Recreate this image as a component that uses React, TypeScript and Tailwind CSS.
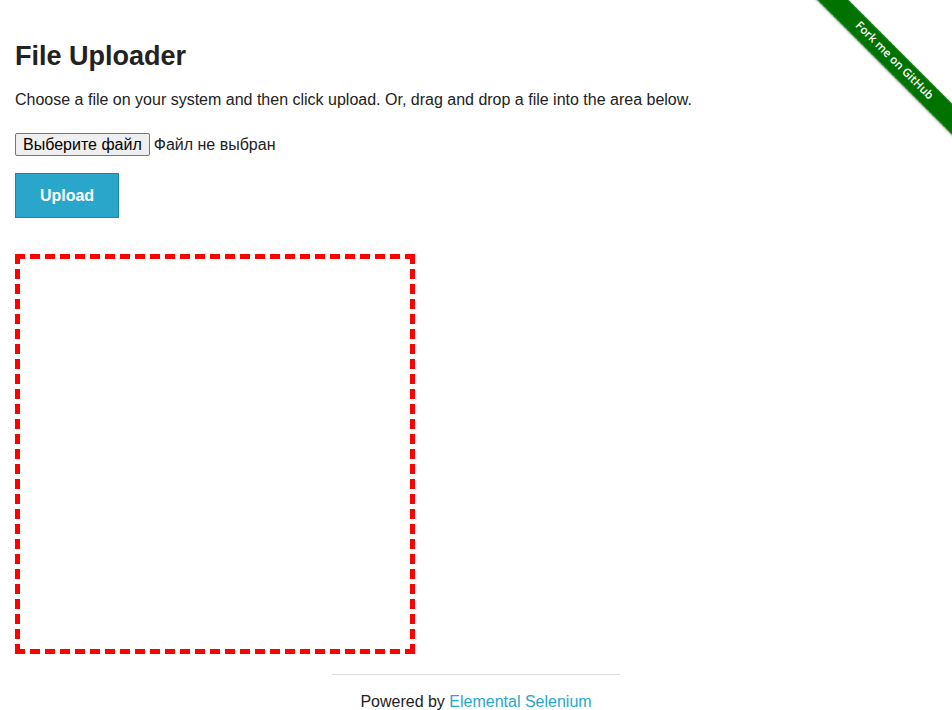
import React from "react";

export default function App() {
  return (
    <div
      className="relative min-h-[710px] w-full bg-white text-[#222222]"
      style={{ fontFamily: '"Liberation Sans", Arial, sans-serif' }}
    >
      {/* GitHub ribbon */}
      <div className="absolute right-0 top-0 h-[149px] w-[149px] overflow-hidden">
        <div className="absolute left-[-29px] top-[50px] flex h-[22px] w-[240px] rotate-45 items-center justify-center border-y border-dotted border-[#4a9a4a] bg-[#007200] shadow-[0_1px_2px_rgba(0,0,0,0.35)]">
          <span
            className="mt-[-2px] text-[11.5px] font-semibold leading-none text-white"
            style={{ fontFamily: '"Open Sans", "Liberation Sans", sans-serif' }}
          >
            Fork me on GitHub
          </span>
        </div>
      </div>

      <div className="px-[15px] pt-[40px]">
        <h3 className="text-[27px] font-bold leading-[32px] text-[#222222]">File Uploader</h3>
        <p className="mt-[18px] text-[16px] leading-[20px]">
          Choose a file on your system and then click upload. Or, drag and drop a file into the area below.
        </p>
        <div className="mt-[23px] flex items-center">
          <button className="h-[23px] rounded-[2px] border border-[#767676] bg-[#efefef] px-[7px] text-[16px] leading-[19px] text-black">
            Выберите файл
          </button>
          <span className="ml-[4px] text-[16px] leading-[20px] text-[#222222]">Файл не выбран</span>
        </div>
        <button className="mt-[17px] h-[45px] w-[104px] border border-[#2284a1] bg-[#2ba6cb] text-[16px] font-bold text-white">
          Upload
        </button>
        <div className="mt-[36px] h-[400px] w-[400px] border-[5px] border-dashed border-[#ff0000]" />
      </div>

      <div className="mt-[20px] flex justify-center">
        <div className="w-[288px] border-t border-[#dddddd]" />
      </div>
      <div className="mt-[17px] text-center text-[16px] leading-[20px] text-[#222222]">
        Powered by <span className="text-[#2ba6cb]">Elemental Selenium</span>
      </div>
    </div>
  );
}
